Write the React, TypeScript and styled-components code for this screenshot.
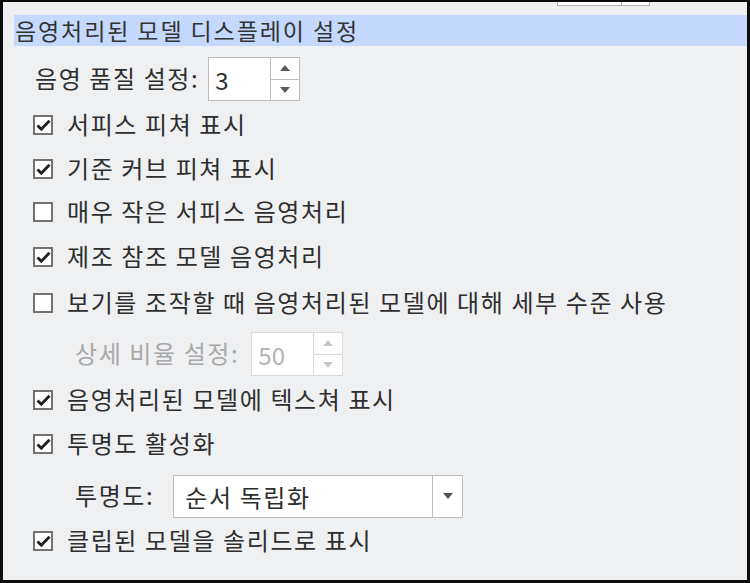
import React from "react";
import styled, { createGlobalStyle } from "styled-components";

const Global = createGlobalStyle`
  html, body { margin: 0; padding: 0; background: #eff0f2; }
  body { font-family: "Noto Sans CJK KR", "Noto Sans", sans-serif; }
`;

const Frame = styled.div`
  width: 750px;
  height: 583px;
  box-sizing: border-box;
  border-style: solid;
  border-color: #0c0c0c;
  border-width: 2px 3px 3px 3px;
  background: #eff0f2;
  display: flex;
  flex-direction: column;
  overflow: hidden;
  color: #2e2e2e;
`;

const TopStrip = styled.div`
  height: 13px;
  display: flex;
  padding-left: 554px;
`;

const CutBox = styled.div`
  display: flex;
  height: 3px;
  border: 1px solid #b4b4b4;
  border-top: none;
  background: #fff;
`;

const CutPart = styled.div<{ $w: number; $last?: boolean }>`
  width: ${(p) => p.$w}px;
  border-right: ${(p) => (p.$last ? "none" : "1px solid #b4b4b4")};
`;

const Header = styled.div`
  margin-left: 11px;
  height: 31px;
  background: #c5d8fe;
  font-size: 23px;
  letter-spacing: 1.9px;
  line-height: 31px;
  padding-left: 1px;
  white-space: nowrap;
  color: #333;
`;

const Body = styled.div`
  display: flex;
  flex-direction: column;
  padding-top: 10px;
`;

const Row = styled.div<{ $h: number; $indent: number }>`
  height: ${(p) => p.$h}px;
  display: flex;
  align-items: center;
  padding-left: ${(p) => p.$indent}px;
  white-space: nowrap;
`;

const Label = styled.span<{ $disabled?: boolean }>`
  font-size: 24px;
  letter-spacing: 1.6px;
  line-height: 30px;
  margin-top: -2px;
  color: ${(p) => (p.$disabled ? "#a9a9a9" : "#2e2e2e")};
`;

const Box = styled.span`
  width: 20px;
  height: 20px;
  box-sizing: border-box;
  border: 2px solid #727272;
  background: #fff;
  display: inline-flex;
  align-items: center;
  justify-content: center;
  margin-right: 14px;
  flex: none;
`;

const Spin = styled.div<{ $disabled?: boolean; $gap: number }>`
  margin-left: ${(p) => p.$gap}px;
  width: 92px;
  height: 44px;
  box-sizing: border-box;
  border: 1.5px solid ${(p) => (p.$disabled ? "#dadada" : "#bdbdbd")};
  background: #fff;
  display: flex;
`;

const SpinValue = styled.div<{ $disabled?: boolean }>`
  flex: 1;
  display: flex;
  align-items: center;
  padding-left: 6px;
  font-size: 24px;
  color: ${(p) => (p.$disabled ? "#b4b4b4" : "#2e2e2e")};
  border-right: 1.5px solid ${(p) => (p.$disabled ? "#dadada" : "#bdbdbd")};
`;

const SpinButtons = styled.div`
  width: 28px;
  display: flex;
  flex-direction: column;
`;

const SpinBtn = styled.div<{ $disabled?: boolean; $top?: boolean }>`
  flex: 1;
  display: flex;
  align-items: center;
  justify-content: center;
  border-bottom: ${(p) =>
    p.$top ? `1.5px solid ${p.$disabled ? "#dadada" : "#bdbdbd"}` : "none"};
`;

const Select = styled.div`
  margin-left: 19px;
  width: 290px;
  height: 43px;
  box-sizing: border-box;
  border: 1.5px solid #bdbdbd;
  background: #fff;
  display: flex;
`;

const SelectValue = styled.div`
  flex: 1;
  display: flex;
  align-items: center;
  padding-left: 11px;
  font-size: 24px;
  letter-spacing: 1.6px;
  color: #2e2e2e;
  border-right: 1.5px solid #bdbdbd;
`;

const SelectArrow = styled.div`
  width: 29px;
  display: flex;
  align-items: center;
  justify-content: center;
`;

const Tri = ({ up, color }: { up?: boolean; color: string }) => (
  <svg width="10" height="6" viewBox="0 0 10 6">
    <polygon points={up ? "0,6 10,6 5,0" : "0,0 10,0 5,6"} fill={color} />
  </svg>
);

const Check = () => (
  <svg width="15" height="13" viewBox="0 0 15 13">
    <path d="M1.5 6.5 L5.3 10.3 L13.5 1.8" fill="none" stroke="#1e1e1e" strokeWidth="2.8" />
  </svg>
);

const CheckRow = ({ h, checked, text }: { h: number; checked?: boolean; text: string }) => (
  <Row $h={h} $indent={30}>
    <Box>{checked && <Check />}</Box>
    <Label>{text}</Label>
  </Row>
);

const SpinBox = ({ value, disabled, gap }: { value: string; disabled?: boolean; gap: number }) => {
  const c = disabled ? "#c8c8c8" : "#5a5a5a";
  return (
    <Spin $disabled={disabled} $gap={gap}>
      <SpinValue $disabled={disabled}>{value}</SpinValue>
      <SpinButtons>
        <SpinBtn $top $disabled={disabled}>
          <Tri up color={c} />
        </SpinBtn>
        <SpinBtn $disabled={disabled}>
          <Tri color={c} />
        </SpinBtn>
      </SpinButtons>
    </Spin>
  );
};

export default function App() {
  return (
    <>
      <Global />
      <Frame>
        <TopStrip>
          <CutBox>
            <CutPart $w={63} />
            <CutPart $w={27} $last />
          </CutBox>
        </TopStrip>
        <Header>음영처리된 모델 디스플레이 설정</Header>
        <Body>
          <Row $h={46} $indent={32}>
            <Label>음영 품질 설정:</Label>
            <SpinBox value="3" gap={9} />
          </Row>
          <CheckRow h={46} checked text="서피스 피쳐 표시" />
          <CheckRow h={42} checked text="기준 커브 피쳐 표시" />
          <CheckRow h={44} text="매우 작은 서피스 음영처리" />
          <CheckRow h={46} checked text="제조 참조 모델 음영처리" />
          <CheckRow h={46} text="보기를 조작할 때 음영처리된 모델에 대해 세부 수준 사용" />
          <Row $h={56} $indent={72}>
            <Label $disabled>상세 비율 설정:</Label>
            <SpinBox value="50" disabled gap={12} />
          </Row>
          <CheckRow h={36} checked text="음영처리된 모델에 텍스쳐 표시" />
          <CheckRow h={52} checked text="투명도 활성화" />
          <Row $h={52} $indent={72}>
            <Label>투명도:</Label>
            <Select>
              <SelectValue>순서 독립화</SelectValue>
              <SelectArrow>
                <Tri color="#555" />
              </SelectArrow>
            </Select>
          </Row>
          <CheckRow h={38} checked text="클립된 모델을 솔리드로 표시" />
        </Body>
      </Frame>
    </>
  );
}
